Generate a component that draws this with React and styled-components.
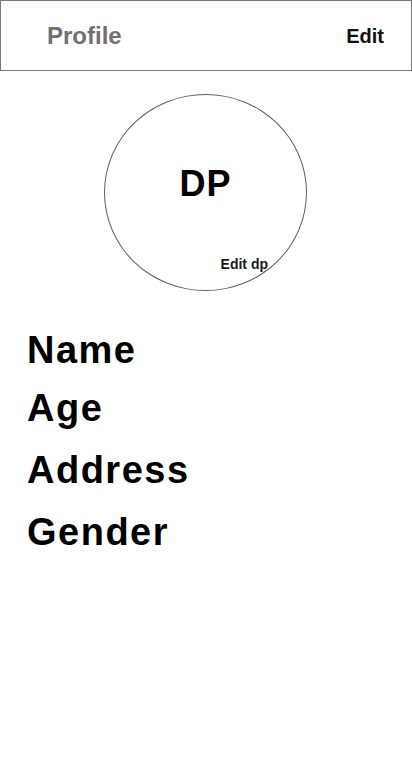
import React from 'react';
import styled, { createGlobalStyle } from 'styled-components';

const GlobalStyle = createGlobalStyle`
    body {
        margin: 0;
        background: #ffffff;
        font-family: "Liberation Sans", Arial, Helvetica, sans-serif;
    }
`

const Page = styled.div`
    width: 412px;
    min-height: 778px;
    display: flex;
    flex-direction: column;
`
const Header = styled.div`
    height: 69px;
    border: 1px solid #777777;
    display: flex;
    align-items: center;
    justify-content: space-between;
    padding: 0 27px 0 46px;
`
const Title = styled.div`
    font-size: 24px;
    font-weight: bold;
    color: #707070;
    margin-top: 1px;
`
const EditButton = styled.div`
    font-size: 20px;
    font-weight: bold;
    color: #111111;
    margin-top: 1px;
`
const Avatar = styled.div`
    width: 201px;
    height: 195px;
    margin: 23px 0 0 104px;
    border: 1px solid #606060;
    border-radius: 50%;
    display: flex;
    flex-direction: column;
    align-items: center;
`
const Initials = styled.div`
    font-size: 36px;
    font-weight: bold;
    color: #000000;
    letter-spacing: 1px;
    margin-top: 71px;
    line-height: 36px;
`
const EditDp = styled.div`
    font-size: 14px;
    font-weight: bold;
    color: #1a1a1a;
    align-self: flex-end;
    margin: 54px 38px 0 0;
    line-height: 16px;
`
const Fields = styled.div`
    display: flex;
    flex-direction: column;
    padding: 39px 0 0 27px;
`
const Field = styled.div`
    font-size: 38px;
    font-weight: bold;
    color: #000000;
    letter-spacing: 1.5px;
    line-height: 40px;
    margin-top: ${props => props.gap}px;
`

const fields = [
    { label: 'Name', gap: 0 },
    { label: 'Age', gap: 18 },
    { label: 'Address', gap: 22 },
    { label: 'Gender', gap: 22 },
]

export default function App() {
    return (
        <Page>
            <GlobalStyle />
            <Header>
                <Title>Profile</Title>
                <EditButton>Edit</EditButton>
            </Header>
            <Avatar>
                <Initials>DP</Initials>
                <EditDp>Edit dp</EditDp>
            </Avatar>
            <Fields>
                {fields.map(f => (
                    <Field key={f.label} gap={f.gap}>{f.label}</Field>
                ))}
            </Fields>
        </Page>
    );
}
